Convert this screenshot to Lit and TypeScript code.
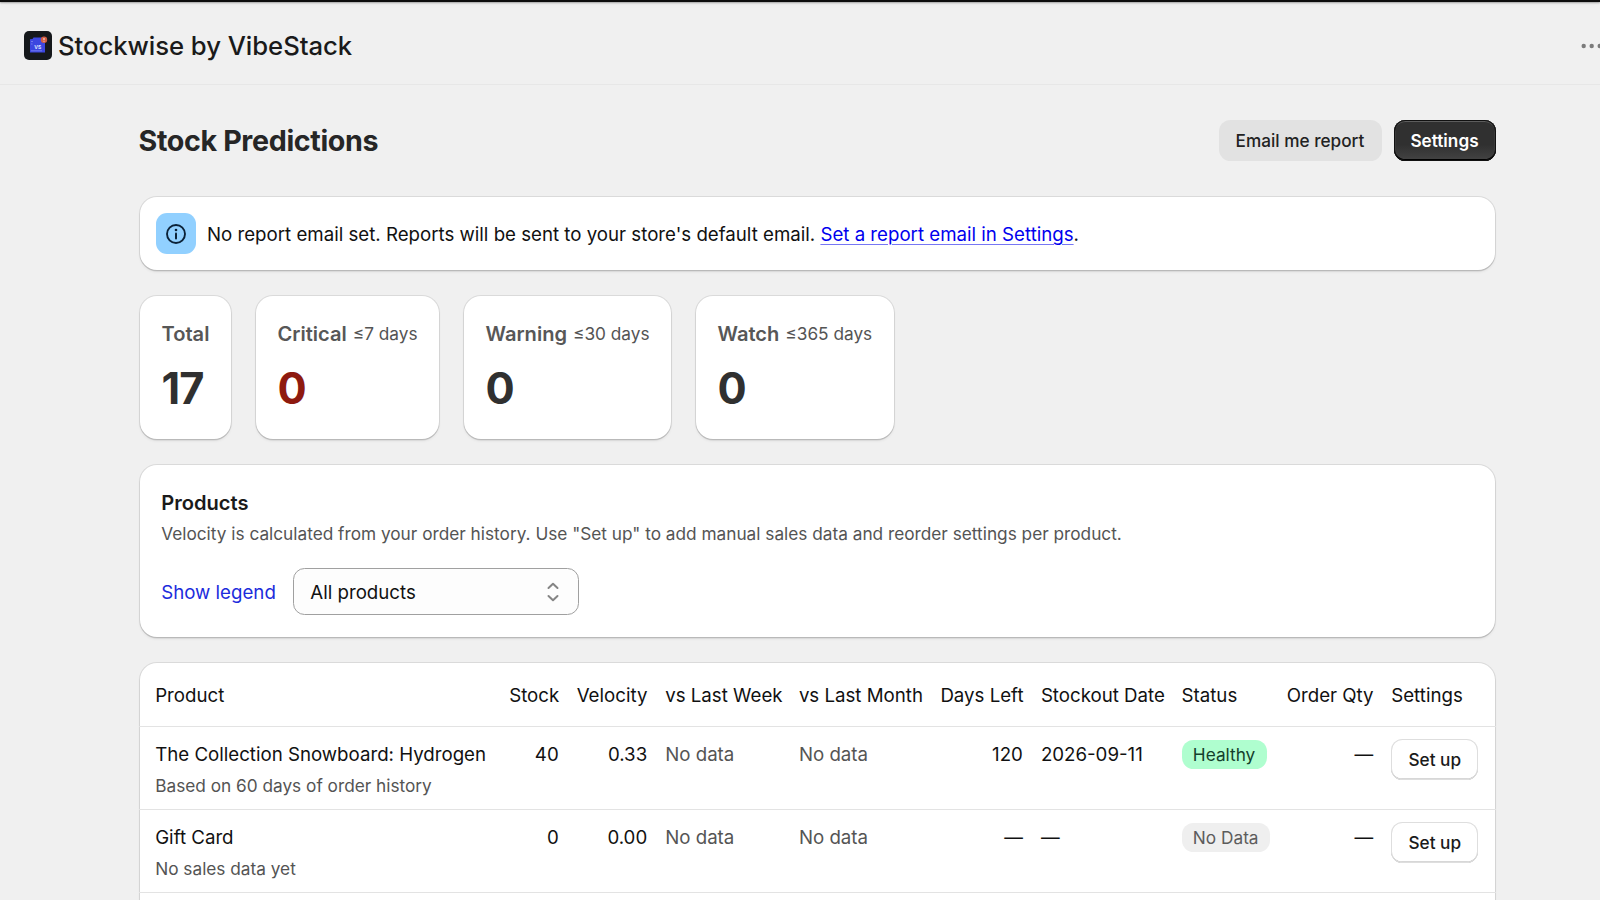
import { LitElement, html, css, nothing } from "lit";

interface Stat { label: string; range?: string; value: string; critical?: boolean; width: number; }
interface Row { name: string; note: string; stock: string; velocity: string; days: string; date: string; status: string; healthy: boolean; }

const stats: Stat[] = [
  { label: "Total", value: "17", width: 91 },
  { label: "Critical", range: "≤7 days", value: "0", critical: true, width: 183 },
  { label: "Warning", range: "≤30 days", value: "0", width: 207 },
  { label: "Watch", range: "≤365 days", value: "0", width: 198 },
];

const rows: Row[] = [
  { name: "The Collection Snowboard: Hydrogen", note: "Based on 60 days of order history", stock: "40", velocity: "0.33", days: "120", date: "2026-09-11", status: "Healthy", healthy: true },
  { name: "Gift Card", note: "No sales data yet", stock: "0", velocity: "0.00", days: "—", date: "—", status: "No Data", healthy: false },
];

class AppRoot extends LitElement {
  static styles = css`
    :host { display: block; height: 900px; overflow: hidden; background: #f0f0f0; color: #111; font-family: Inter, sans-serif; font-size: 18.68px; line-height: 28px; white-space: nowrap; }
    * { box-sizing: border-box; }
    .strip { height: 2px; background: #0c0c0c; box-shadow: 0 1px 2px rgba(0, 0, 0, .35), 0 2px 8px rgba(0, 0, 0, .08); }
    .topbar { height: 83px; border-bottom: 1px solid #e7e7e7; display: flex; align-items: center; justify-content: space-between; padding: 5px 0 0 24px; overflow: hidden; }
    .brand { display: flex; align-items: center; gap: 6px; }
    .brand-icon { display: block; width: 28px; height: 29px; }
    .brand-name { font-size: 25.7px; font-weight: 500; line-height: 34px; letter-spacing: -.05px; color: #1a1a1a; padding-top: 1px; }
    .more { display: block; margin-right: -5px; }
    .page { padding: 35px 105.5px 0 140px; }
    .heading { display: flex; justify-content: space-between; align-items: center; height: 41px; margin: 0 -1px 0 -1.5px; }
    h1 { margin: 0; font-size: 28.66px; line-height: 40px; font-weight: 650; letter-spacing: -.36px; color: #262626; padding-top: 1px; }
    .actions { display: flex; gap: 12px; }
    .btn { font: 500 17.2px/26px Inter, sans-serif; border: 0; border-radius: 11.5px; height: 41px; padding: 0; color: #222; display: flex; align-items: center; justify-content: center; }
    .email { width: 163px; background: #e2e2e2; }
    .primary { width: 102px; color: #fff; font-weight: 600; background: linear-gradient(#303030 60%, #444); box-shadow: inset 0 0 0 1px #111, inset 0 -2px 0 #000, inset 0 2px 0 #5c5c5c, inset 1.5px 0 0 #444, inset -1.5px 0 0 #444; }
    .card { background: #fff; border-radius: 17px; box-shadow: 0 0 0 1px rgba(0, 0, 0, .09), 0 1.5px 0 rgba(0, 0, 0, .09), 0 2px 3px rgba(0, 0, 0, .07); }
    .banner { margin-top: 36px; height: 73px; display: flex; align-items: center; padding: 0 16px; gap: 11px; color: #111; }
    .banner-text { padding-top: 2px; }
    .info { width: 40px; height: 41px; border-radius: 11px; background: #91d0ff; display: grid; place-items: center; }
    .banner a { color: #0000ee; text-decoration: underline; text-decoration-thickness: 1px; text-decoration-color: #7777f4; text-underline-offset: 3px; }
    .stats { margin-top: 26px; display: flex; gap: 25px; }
    .stat { height: 143px; padding: 23px 21px 0 21.5px; }
    .stat-label { display: flex; align-items: center; gap: 6px; color: #575757; height: 29px; }
    .stat-name { font-size: 20.1px; font-weight: 600; }
    .muted { color: #545454; font-size: 17.24px; }
    .value { font-size: 43.3px; line-height: 48px; font-weight: 700; letter-spacing: -1px; color: #303030; margin-top: 16px; }
    .red { color: #8e1a0f; }
    .products { margin-top: 26px; height: 172px; padding: 23px 21.2px 0; }
    h2 { margin: 0; font-size: 20.1px; line-height: 30px; font-weight: 600; color: #1a1a1a; }
    .products p { margin: 2px 0 0; line-height: 28px; }
    .filters { display: flex; align-items: center; gap: 17.5px; margin-top: 20px; }
    .legend, .choice { padding-top: 2px; }
    .legend { color: #1c2cdc; }
    .select { width: 286px; height: 47px; border: 1px solid #a0a0a0; border-radius: 11.5px; background: #fdfdfd; display: flex; align-items: center; justify-content: space-between; padding: 0 16px; }
    .table { margin-top: 26px; height: 300px; }
    .row { display: grid; grid-template-columns: 336px 49.5px 70.5px 115.7px 123.5px 82.5px 122.7px 87.2px 86.5px 87px; column-gap: 18px; padding: 12px 15.5px 0 16.2px; height: 83px; border-top: 1px solid #e3e3e3; margin: 0 -1px; }
    .head { height: 63px; border-top: 0; padding-top: 17px; }
    .row > .num { text-align: right; }
    .name, .num, .cell { padding-top: 2px; }
    .note { display: block; margin-top: 2.5px; line-height: 28px; }
    .soft { color: #555; }
    .badge { display: inline-flex; align-items: center; height: 29px; border-radius: 11.5px; padding: 0 11.3px; font-size: 17.24px; background: #efefef; color: #5c5c5c; margin-top: 1px; vertical-align: top; }
    .healthy { background: #affecf; color: #14402c; }
    .setup { width: 87px; background: #fff; color: #1a1a1a; box-shadow: inset 0 0 0 1px #dedede, inset 0 -1.5px 0 #b0b0b0; }
  `;

  private statCard(s: Stat) {
    return html`<div class="card stat" style="width:${s.width}px">
      <div class="stat-label"><span class="stat-name">${s.label}</span>${s.range ? html`<span class="muted">${s.range}</span>` : nothing}</div>
      <div class="value ${s.critical ? "red" : ""}">${s.value}</div>
    </div>`;
  }

  private productRow(r: Row) {
    return html`<div class="row">
      <div class="name">${r.name}<span class="note muted">${r.note}</span></div>
      <div class="num">${r.stock}</div>
      <div class="num">${r.velocity}</div>
      <div class="cell soft">No data</div>
      <div class="cell soft">No data</div>
      <div class="num">${r.days}</div>
      <div class="cell">${r.date}</div>
      <div><span class="badge ${r.healthy ? "healthy" : ""}">${r.status}</span></div>
      <div class="num">—</div>
      <div><button class="btn setup">Set up</button></div>
    </div>`;
  }

  render() {
    return html`
      <div class="strip"></div>
      <header class="topbar">
        <div class="brand">
          <svg class="brand-icon" viewBox="0 0 28 29">
            <rect width="28" height="29" rx="5" fill="#15181b"/>
            <path d="M6 8.3 8.5 8 9.5 6.6h8L21 9v12.5H6z" fill="#3c46e0"/>
            <path d="M7 10.5h2M7 13h1.5M7 19.8h11" stroke="#7f86f0" stroke-width=".8"/>
            <text x="13.7" y="17.5" text-anchor="middle" font-family="Inter, sans-serif" font-size="5" font-weight="700" fill="#dfe2ff">VS</text>
            <circle cx="20" cy="8.7" r="3.2" fill="#cf5c42"/>
            <path d="M20 7.1v1.8M20 9.8v.8" stroke="#fff" stroke-width="1"/>
          </svg>
          <span class="brand-name">Stockwise by VibeStack</span>
        </div>
        <svg class="more" width="24" height="8" viewBox="0 0 24 8" fill="#7b7b7b"><circle cx="2.7" cy="4" r="2.2"/><circle cx="10.7" cy="4" r="2.2"/><circle cx="18.7" cy="4" r="2.2"/></svg>
      </header>
      <main class="page">
        <div class="heading">
          <h1>Stock Predictions</h1>
          <div class="actions"><button class="btn email">Email me report</button><button class="btn primary">Settings</button></div>
        </div>
        <section class="card banner">
          <div class="info"><svg width="22" height="22" viewBox="0 0 22 22" fill="none" stroke="#0b2238"><circle cx="11" cy="11" r="9" stroke-width="1.9"/><path d="M11 10.4v5" stroke-width="2" stroke-linecap="round"/><circle cx="11" cy="7" r="1.3" fill="#0b2238" stroke="none"/></svg></div>
          <div class="banner-text">No report email set. Reports will be sent to your store's default email. <a>Set a report email in Settings</a>.</div>
        </section>
        <section class="stats">${stats.map((s) => this.statCard(s))}</section>
        <section class="card products">
          <h2>Products</h2>
          <p class="muted">Velocity is calculated from your order history. Use "Set up" to add manual sales data and reorder settings per product.</p>
          <div class="filters">
            <span class="legend">Show legend</span>
            <div class="select"><span class="choice">All products</span>
              <svg width="18" height="22" viewBox="0 0 18 22" fill="none" stroke="#858585" stroke-width="2" stroke-linecap="round" stroke-linejoin="round"><path d="m4.5 7 4.5-4.2L13.5 7M4.5 15l4.5 4.2 4.5-4.2"/></svg>
            </div>
          </div>
        </section>
        <section class="card table">
          <div class="row head">
            <div class="cell">Product</div><div class="num">Stock</div><div class="num">Velocity</div><div class="cell">vs Last Week</div><div class="cell">vs Last Month</div><div class="num">Days Left</div><div class="cell">Stockout Date</div><div class="cell">Status</div><div class="num">Order Qty</div><div class="cell">Settings</div>
          </div>
          ${rows.map((r) => this.productRow(r))}
          <div class="row"></div>
        </section>
      </main>`;
  }
}
customElements.define("app-root", AppRoot);
